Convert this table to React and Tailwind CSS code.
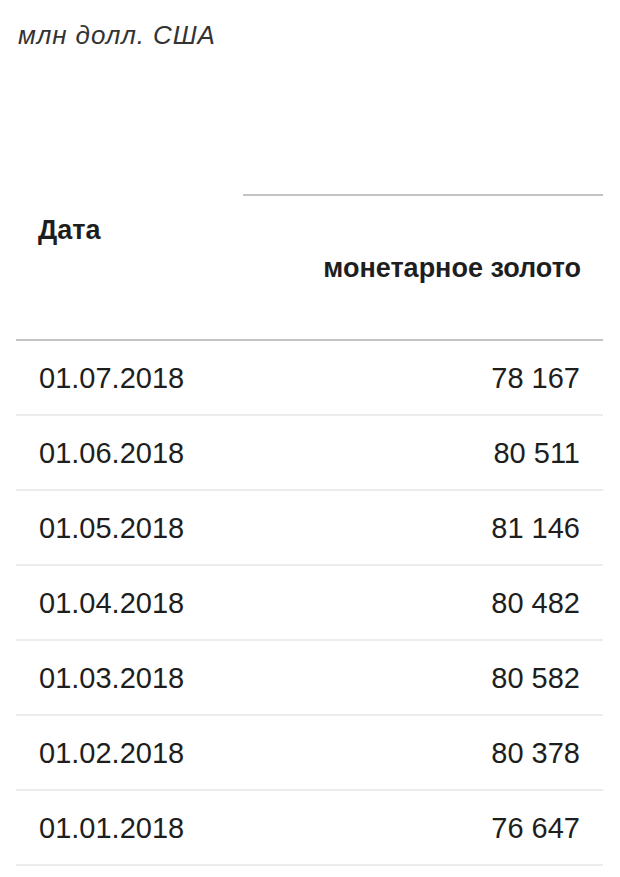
export default function App() {
  const rows = [
    ["01.07.2018", "78 167"],
    ["01.06.2018", "80 511"],
    ["01.05.2018", "81 146"],
    ["01.04.2018", "80 482"],
    ["01.03.2018", "80 582"],
    ["01.02.2018", "80 378"],
    ["01.01.2018", "76 647"],
  ];
  return (
    <div className="w-[620px] h-[877px] bg-white text-[#1e1e1e] overflow-hidden" style={{ fontFamily: '"Liberation Sans", Arial, sans-serif' }}>
      <div className="pl-[18px] pt-[20px] text-[26px] leading-[30px] italic tracking-[0.9px] text-[#333]">млн долл. США</div>
      <div className="ml-[16px] w-[587px] mt-[144px]">
        <div className="grid grid-cols-[227px_1fr] h-[147px] border-b-2 border-[#c4c4c4]">
          <div className="pl-[22px] pt-[20px] text-[27px] leading-[32px] font-bold">Дата</div>
          <div className="border-t-2 border-[#c4c4c4] pr-[22px] pt-[56px] text-right text-[27px] leading-[32px] font-bold">монетарное золото</div>
        </div>
        {rows.map(([d, v]) => (
          <div key={d} className="flex items-center justify-between h-[75px] border-b-2 border-[#ececec] px-[23px] text-[29px] leading-[34px]">
            <span>{d}</span>
            <span>{v}</span>
          </div>
        ))}
      </div>
    </div>
  );
}
